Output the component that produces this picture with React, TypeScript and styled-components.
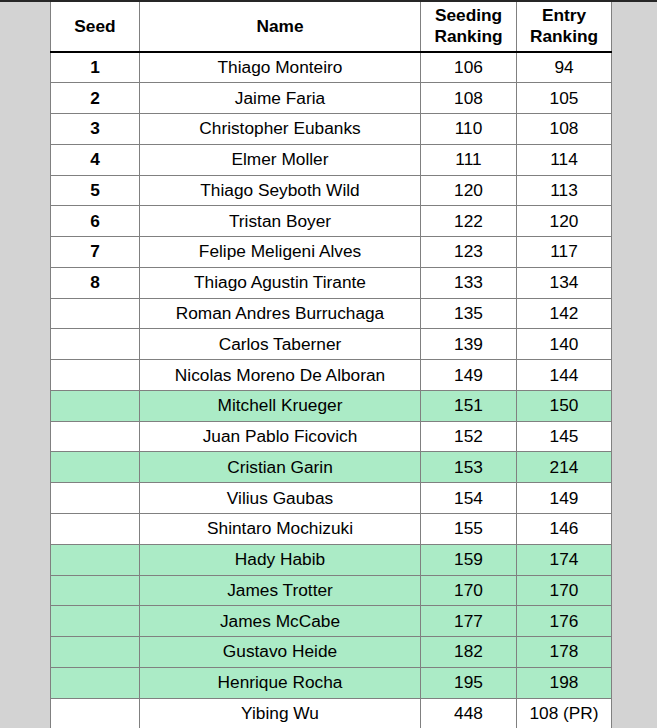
import React from "react";
import styled, { createGlobalStyle } from "styled-components";

const GlobalStyle = createGlobalStyle`
  html, body { margin: 0; padding: 0; }
  body {
    background: #d3d3d3;
    font-family: "Liberation Sans", Arial, sans-serif;
    color: #000;
  }
`;

const TopBar = styled.div`
  height: 2px;
  background: #262626;
`;

const Page = styled.div`
  display: flex;
  padding: 0 45px 40px 50px;
`;

const Table = styled.table`
  width: 561px;
  border-collapse: collapse;
  background: #fff;
  table-layout: fixed;
  font-size: 17.3px;
`;

const HeadCell = styled.th<{ $w: number }>`
  box-sizing: border-box;
  width: ${(p) => p.$w}px;
  border: 1px solid #808080;
  border-top: none;
  border-bottom: 2px solid #000;
  font-weight: bold;
  line-height: 21px;
  padding: 3px 2px 4px;
  text-align: center;
  vertical-align: middle;
`;

const Row = styled.tr<{ $green: boolean }>`
  height: 30.78px;
  background: ${(p) => (p.$green ? "#abebc6" : "#fff")};
`;

const Cell = styled.td<{ $bold?: boolean }>`
  border: 1px solid #808080;
  padding: 0 2px 1px;
  text-align: center;
  vertical-align: middle;
  line-height: 20px;
  font-weight: ${(p) => (p.$bold ? "bold" : "normal")};
  white-space: nowrap;
  overflow: hidden;
`;

type Player = { seed?: number; name: string; seeding: string; entry: string; green?: boolean };

const players: Player[] = [
  { seed: 1, name: "Thiago Monteiro", seeding: "106", entry: "94" },
  { seed: 2, name: "Jaime Faria", seeding: "108", entry: "105" },
  { seed: 3, name: "Christopher Eubanks", seeding: "110", entry: "108" },
  { seed: 4, name: "Elmer Moller", seeding: "111", entry: "114" },
  { seed: 5, name: "Thiago Seyboth Wild", seeding: "120", entry: "113" },
  { seed: 6, name: "Tristan Boyer", seeding: "122", entry: "120" },
  { seed: 7, name: "Felipe Meligeni Alves", seeding: "123", entry: "117" },
  { seed: 8, name: "Thiago Agustin Tirante", seeding: "133", entry: "134" },
  { name: "Roman Andres Burruchaga", seeding: "135", entry: "142" },
  { name: "Carlos Taberner", seeding: "139", entry: "140" },
  { name: "Nicolas Moreno De Alboran", seeding: "149", entry: "144" },
  { name: "Mitchell Krueger", seeding: "151", entry: "150", green: true },
  { name: "Juan Pablo Ficovich", seeding: "152", entry: "145" },
  { name: "Cristian Garin", seeding: "153", entry: "214", green: true },
  { name: "Vilius Gaubas", seeding: "154", entry: "149" },
  { name: "Shintaro Mochizuki", seeding: "155", entry: "146" },
  { name: "Hady Habib", seeding: "159", entry: "174", green: true },
  { name: "James Trotter", seeding: "170", entry: "170", green: true },
  { name: "James McCabe", seeding: "177", entry: "176", green: true },
  { name: "Gustavo Heide", seeding: "182", entry: "178", green: true },
  { name: "Henrique Rocha", seeding: "195", entry: "198", green: true },
  { name: "Yibing Wu", seeding: "448", entry: "108 (PR)" },
];

export default function App() {
  return (
    <>
      <GlobalStyle />
      <TopBar />
      <Page>
        <Table>
          <thead>
            <tr>
              <HeadCell $w={89}>Seed</HeadCell>
              <HeadCell $w={281}>Name</HeadCell>
              <HeadCell $w={96}>
                Seeding
                <br />
                Ranking
              </HeadCell>
              <HeadCell $w={95}>
                Entry
                <br />
                Ranking
              </HeadCell>
            </tr>
          </thead>
          <tbody>
            {players.map((p) => (
              <Row key={p.name} $green={!!p.green}>
                <Cell $bold>{p.seed ?? ""}</Cell>
                <Cell>{p.name}</Cell>
                <Cell>{p.seeding}</Cell>
                <Cell>{p.entry}</Cell>
              </Row>
            ))}
          </tbody>
        </Table>
      </Page>
    </>
  );
}
